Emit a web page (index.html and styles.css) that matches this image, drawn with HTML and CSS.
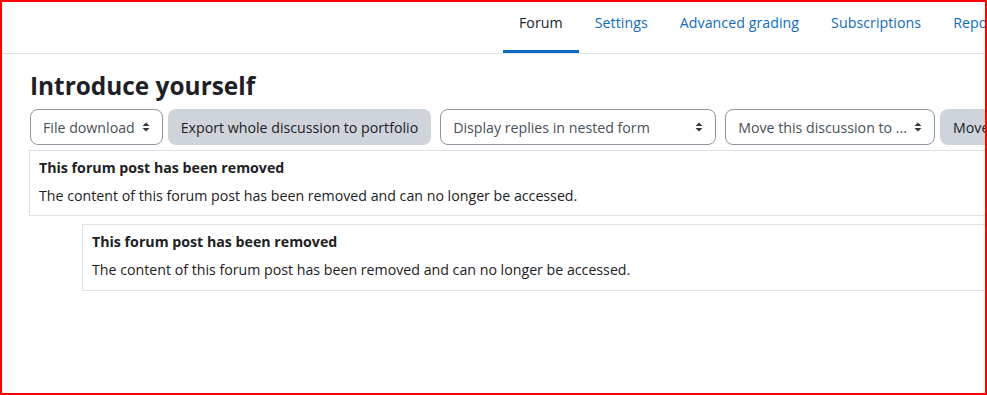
FILE: index.html
```html
<!DOCTYPE html>
<html lang="en">
<head>
<meta charset="utf-8">
<title>Introduce yourself</title>
<link rel="stylesheet" href="styles.css">
</head>
<body>
<div class="frame">
  <nav class="tabs">
    <a class="tab active">Forum</a>
    <a class="tab">Settings</a>
    <a class="tab">Advanced grading</a>
    <a class="tab">Subscriptions</a>
    <a class="tab">Reports</a>
  </nav>
  <main class="page">
    <h2 class="page-title">Introduce yourself</h2>
    <div class="toolbar">
      <div class="group">
        <div class="select">File download<svg class="caret" viewBox="0 0 8 10" width="8" height="10"><path d="M4 0.5 L7.5 4 H0.5 Z M4 9.5 L0.5 6 H7.5 Z"/></svg></div>
        <button class="btn">Export whole discussion to portfolio</button>
      </div>
      <div class="select select-wide">Display replies in nested form<svg class="caret" viewBox="0 0 8 10" width="8" height="10"><path d="M4 0.5 L7.5 4 H0.5 Z M4 9.5 L0.5 6 H7.5 Z"/></svg></div>
      <div class="group">
        <div class="select">Move this discussion to ...<svg class="caret" viewBox="0 0 8 10" width="8" height="10"><path d="M4 0.5 L7.5 4 H0.5 Z M4 9.5 L0.5 6 H7.5 Z"/></svg></div>
        <button class="btn">Move</button>
      </div>
    </div>
    <article class="post">
      <h3 class="post-title">This forum post has been removed</h3>
      <p class="post-body">The content of this forum post has been removed and can no longer be accessed.</p>
    </article>
    <div class="replies">
      <article class="post">
        <h3 class="post-title">This forum post has been removed</h3>
        <p class="post-body">The content of this forum post has been removed and can no longer be accessed.</p>
      </article>
    </div>
  </main>
</div>
</body>
</html>
```
FILE: styles.css
```css
* { box-sizing: border-box; }
html, body { margin: 0; padding: 0; background: #fff; }
body {
  font-family: "Open Sans", "Noto Sans", sans-serif;
  font-size: 14.2px;
  color: #1d2125;
}
.frame {
  width: 987px;
  height: 395px;
  border: 2px solid #ff0000;
  overflow: hidden;
  background: #fff;
}
.tabs {
  display: flex;
  width: 1200px;
  padding-left: 501px;
  border-bottom: 1px solid #dee2e6;
}
.tab {
  display: block;
  flex: none;
  padding: 10px 16px 16px;
  line-height: 22px;
  letter-spacing: 0.05px;
  color: #0f6cbf;
  border-bottom: 3px solid transparent;
  white-space: nowrap;
  cursor: pointer;
}
.tab.active {
  color: #1d2125;
  border-bottom-color: #0f6cbf;
}
.page {
  width: 1150px;
  padding-left: 27px;
}
.page-title {
  margin: 17px 0 9px 1px;
  font-size: 24.4px;
  line-height: 29px;
  font-weight: 700;
  color: #1d2125;
}
.toolbar {
  display: flex;
  flex-wrap: nowrap;
  gap: 9px;
  margin-left: 1px;
  margin-bottom: 5px;
}
.group {
  display: flex;
  gap: 5px;
  flex: none;
}
.select {
  display: flex;
  align-items: center;
  flex: none;
  height: 36px;
  padding: 0 12px 0 12px;
  border: 1px solid #8f959e;
  border-radius: 8px;
  color: #495057;
  white-space: nowrap;
  background: #fff;
}
.select-wide { width: 276px; }
.caret {
  flex: none;
  margin-left: 7px;
  fill: #343a40;
}
.select-wide .caret { margin-left: auto; }
.btn {
  flex: none;
  height: 36px;
  padding: 0 13px;
  border: 0;
  border-radius: 8px;
  background: #ced4da;
  color: #1d2125;
  font: inherit;
  white-space: nowrap;
}
.post {
  border: 1px solid #dee2e6;
  padding: 6px 9px 8px;
}
.replies .post { padding-bottom: 9px; }
.post-title {
  margin: 0 0 6px;
  font-size: 14.2px;
  line-height: 22px;
  font-weight: 700;
}
.post-body {
  margin: 0;
  line-height: 22px;
}
.replies {
  margin: 8px 0 0 53px;
}
```
